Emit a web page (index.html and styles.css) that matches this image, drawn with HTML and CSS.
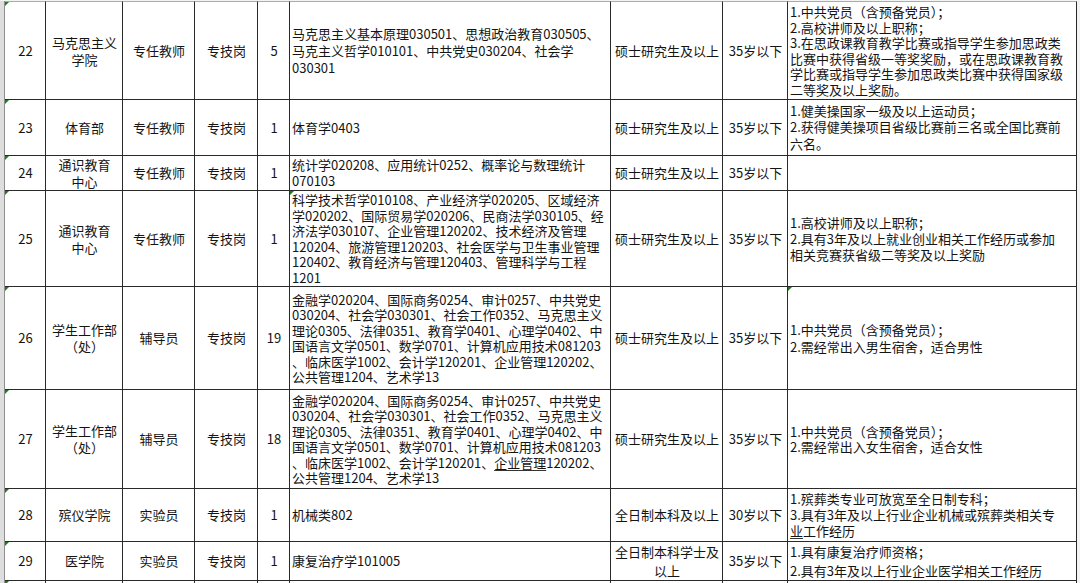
FILE: index.html
```html
<!DOCTYPE html>
<html lang="zh-CN">
<head>
<meta charset="utf-8">
<title>招聘岗位表</title>
<link rel="stylesheet" href="styles.css">
</head>
<body>
<div class="sheet">
  <div class="gutter"></div>
  <table class="grid">
    <colgroup>
      <col class="w-no"><col class="w-dept"><col class="w-post"><col class="w-type"><col class="w-num"><col class="w-spec"><col class="w-edu"><col class="w-age"><col class="w-req">
    </colgroup>
    <tbody>
      <tr class="r22">
        <td class="c flag">22</td>
        <td class="c tall">马克思主义<br>学院</td>
        <td class="c">专任教师</td>
        <td class="c">专技岗</td>
        <td class="c">5</td>
        <td class="l tall">马克思主义基本原理030501、思想政治教育030505、<br>马克主义哲学010101、中共党史030204、社会学<br>030301</td>
        <td class="c">硕士研究生及以上</td>
        <td class="c">35岁以下</td>
        <td class="l dense">1.中共党员（含预备党员）；<br>2.高校讲师及以上职称；<br>3.在思政课教育教学比赛或指导学生参加思政类<br>比赛中获得省级一等奖奖励，或在思政课教育教<br>学比赛或指导学生参加思政类比赛中获得国家级<br>二等奖及以上奖励。</td>
      </tr>
      <tr class="r23">
        <td class="c flag">23</td>
        <td class="c">体育部</td>
        <td class="c">专任教师</td>
        <td class="c">专技岗</td>
        <td class="c">1</td>
        <td class="l">体育学0403</td>
        <td class="c">硕士研究生及以上</td>
        <td class="c">35岁以下</td>
        <td class="l mid">1.健美操国家一级及以上运动员；<br>2.获得健美操项目省级比赛前三名或全国比赛前<br>六名。</td>
      </tr>
      <tr class="r24">
        <td class="c flag">24</td>
        <td class="c tall">通识教育<br>中心</td>
        <td class="c">专任教师</td>
        <td class="c">专技岗</td>
        <td class="c">1</td>
        <td class="l">统计学020208、应用统计0252、概率论与数理统计<br>070103</td>
        <td class="c">硕士研究生及以上</td>
        <td class="c">35岁以下</td>
        <td class="l"></td>
      </tr>
      <tr class="r25">
        <td class="c flag">25</td>
        <td class="c tall">通识教育<br>中心</td>
        <td class="c">专任教师</td>
        <td class="c">专技岗</td>
        <td class="c">1</td>
        <td class="l dense flag">科学技术哲学010108、产业经济学020205、区域经济<br>学020202、国际贸易学020206、民商法学030105、经<br>济法学030107、企业管理120202、技术经济及管理<br>120204、旅游管理120203、社会医学与卫生事业管理<br>120402、教育经济与管理120403、管理科学与工程<br>1201</td>
        <td class="c">硕士研究生及以上</td>
        <td class="c">35岁以下</td>
        <td class="l">1.高校讲师及以上职称；<br>2.具有3年及以上就业创业相关工作经历或参加<br>相关竞赛获省级二等奖及以上奖励</td>
      </tr>
      <tr class="r26">
        <td class="c flag">26</td>
        <td class="c tall">学生工作部<br>（处）</td>
        <td class="c">辅导员</td>
        <td class="c">专技岗</td>
        <td class="c">19</td>
        <td class="l dense">金融学020204、国际商务0254、审计0257、中共党史<br>030204、社会学030301、社会工作0352、马克思主义<br>理论0305、法律0351、教育学0401、心理学0402、中<br>国语言文学0501、数学0701、计算机应用技术081203<br>、临床医学1002、会计学120201、企业管理120202、<br>公共管理1204、艺术学13</td>
        <td class="c">硕士研究生及以上</td>
        <td class="c">35岁以下</td>
        <td class="l tall flag">1.中共党员（含预备党员）；<br>2.需经常出入男生宿舍，适合男性</td>
      </tr>
      <tr class="r27">
        <td class="c flag">27</td>
        <td class="c tall">学生工作部<br>（处）</td>
        <td class="c">辅导员</td>
        <td class="c">专技岗</td>
        <td class="c">18</td>
        <td class="l dense">金融学020204、国际商务0254、审计0257、中共党史<br>030204、社会学030301、社会工作0352、马克思主义<br>理论0305、法律0351、教育学0401、心理学0402、中<br>国语言文学0501、数学0701、计算机应用技术081203<br>、临床医学1002、会计学120201、<span class="ul">企业管理</span>120202、<br>公共管理1204、艺术学13</td>
        <td class="c">硕士研究生及以上</td>
        <td class="c">35岁以下</td>
        <td class="l dense">1.中共党员（含预备党员）；<br>2.需经常出入女生宿舍，适合女性</td>
      </tr>
      <tr class="r28">
        <td class="c flag">28</td>
        <td class="c">殡仪学院</td>
        <td class="c">实验员</td>
        <td class="c">专技岗</td>
        <td class="c">1</td>
        <td class="l">机械类802</td>
        <td class="c">全日制本科及以上</td>
        <td class="c">30岁以下</td>
        <td class="l">1.殡葬类专业可放宽至全日制专科；<br>3.具有3年及以上行业企业机械或殡葬类相关专<br><span class="ul">业</span>工作经历</td>
      </tr>
      <tr class="r29">
        <td class="c flag">29</td>
        <td class="c">医学院</td>
        <td class="c">实验员</td>
        <td class="c">专技岗</td>
        <td class="c">1</td>
        <td class="l">康复治疗学101005</td>
        <td class="c loose">全日制本科学士及<br>以上</td>
        <td class="c">35岁以下</td>
        <td class="l loose">1.具有康复治疗师资格；<br>2.具有3年及以上行业企业医学相关工作经历</td>
      </tr>
      <tr class="r30">
        <td class="c flag"></td>
        <td class="c"></td>
        <td class="c"></td>
        <td class="c"></td>
        <td class="c"></td>
        <td class="l"></td>
        <td class="c"></td>
        <td class="c"></td>
        <td class="l"></td>
      </tr>
    </tbody>
  </table>
</div>
</body>
</html>
```
FILE: styles.css
```css
html, body {
  margin: 0;
  padding: 0;
  overflow: hidden;
  background: #f3f3f3;
}

body {
  padding-top: 1px;
  font-family: "Noto Sans CJK SC", "Noto Sans", sans-serif;
  font-size: 13px;
  color: #141414;
}

.sheet {
  display: flex;
  align-items: stretch;
  width: 1077px;
  background: #fff;
}

.gutter {
  width: 4px;
  flex: none;
  background: #dedede;
  border-right: 1px solid #8e8e8e;
}

.grid {
  table-layout: fixed;
  border-collapse: separate;
  border-spacing: 0;
  width: 1072px;
  flex: none;
  background: #fff;
}

.w-no   { width: 41px; }
.w-dept { width: 77px; }
.w-post { width: 72px; }
.w-type { width: 63px; }
.w-num  { width: 32px; }
.w-spec { width: 321px; }
.w-edu  { width: 112px; }
.w-age  { width: 65px; }
.w-req  { width: 289px; }

.grid td {
  box-sizing: border-box;
  position: relative;
  padding: 0 1px 0 2px;
  border-right: 1px solid #2a2a2a;
  border-bottom: 1px solid #2a2a2a;
  vertical-align: middle;
  line-height: 16px;
  white-space: nowrap;
  overflow: hidden;
}

.grid tr:first-child td {
  border-top: 1px solid #8ac48a;
}

.c { text-align: center; }
.l { text-align: left; }

.grid td.tall  { line-height: 17px; }
.grid td.dense { line-height: 15.5px; }
.grid td.mid   { line-height: 16.5px; }
.grid td.loose { line-height: 19px; }

.ul {
  text-decoration: underline;
  text-decoration-color: #333;
  text-underline-offset: 2px;
}

/* spreadsheet "error indicator" corner marks */
.flag::before {
  content: "";
  position: absolute;
  top: 0;
  left: 0;
  width: 0;
  height: 0;
  border-top: 4px solid #1f7a1f;
  border-right: 4px solid transparent;
}

.r22 { height: 99px; }
.r23 { height: 56px; }
.r24 { height: 35px; }
.r25 { height: 96px; }
.r26 { height: 103px; }
.r27 { height: 99px; }
.r28 { height: 53px; }
.r29 { height: 39px; }
.r30 { height: 60px; }
```
